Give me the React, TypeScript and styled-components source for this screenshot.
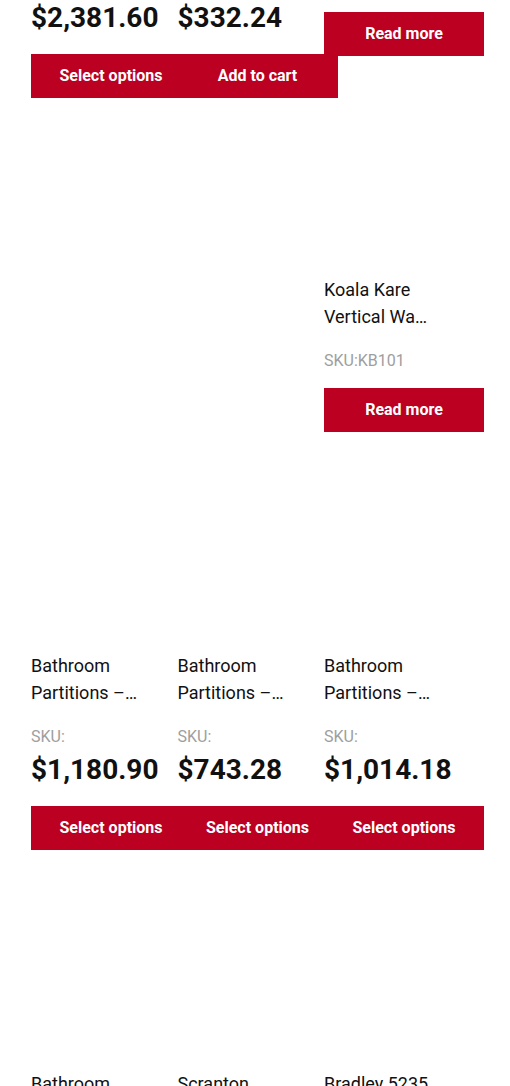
import React from 'react';
import styled, { createGlobalStyle } from 'styled-components';

const GlobalStyle = createGlobalStyle`
  html, body {
    margin: 0;
    padding: 0;
    background: #fff;
  }
  body {
    font-family: Roboto, 'Liberation Sans', sans-serif;
    color: #111;
  }
`;

const Viewport = styled.div`
  height: 100vh;
  overflow: hidden;
`;

// the page is scrolled part way down the shop listing
const Products = styled.div`
  margin-top: -320px;
  padding-left: 31px;
`;

const Row = styled.div`
  display: flex;
  align-items: flex-start;
`;

const Column = styled.div`
  display: flex;
  flex-direction: column;
  width: 146.5px;
  flex-shrink: 0;
`;

const Card = styled.div`
  width: 146.5px;
  flex-shrink: 0;
`;

// product images have not loaded yet, so this is an empty slot
const Thumb = styled.div`
  height: 201px;
  margin-bottom: 19px;
`;

const Title = styled.h2`
  margin: 0;
  width: 106px;
  font-size: 18px;
  font-weight: 400;
  line-height: 27px;
  color: #111;
  display: -webkit-box;
  -webkit-line-clamp: 2;
  -webkit-box-orient: vertical;
  overflow: hidden;
`;

const Sku = styled.div`
  margin-top: 19px;
  font-size: 16px;
  line-height: 24px;
  color: #9e9e9e;
  white-space: nowrap;
`;

const Price = styled.div`
  font-size: 28px;
  font-weight: 700;
  line-height: 42px;
  color: #111;
  white-space: nowrap;
`;

const Button = styled.a`
  display: block;
  margin-top: 15px;
  width: 160px;
  height: 44px;
  background: #bb0021;
  color: #fff;
  font-size: 16px;
  font-weight: 700;
  line-height: 44px;
  text-align: center;
  text-decoration: none;
  cursor: pointer;
`;

type Product = {
  title: string;
  sku: string;
  price?: string;
  action: string;
};

function ProductCard({ product }: { product: Product }): JSX.Element {
  return (
    <Card>
      <Thumb />
      <Title>{product.title}</Title>
      <Sku>SKU:{product.sku}</Sku>
      {product.price && <Price>{product.price}</Price>}
      <Button>{product.action}</Button>
    </Card>
  );
}

const first: Product[] = [
  { title: 'Bathroom Partitions – Phenolic Core', sku: '', price: '$2,381.60', action: 'Select options' },
  { title: 'Bobrick B-2888 Toilet Tissue Dispenser', sku: 'B2888', price: '$332.24', action: 'Add to cart' },
  { title: 'ASI 0199 Baby Changing Station', sku: 'ASI0199', action: 'Read more' },
];

const koala: Product = {
  title: 'Koala Kare Vertical Wall Mounted Baby Changing Station',
  sku: 'KB101',
  action: 'Read more',
};

const second: Product[] = [
  { title: 'Bathroom Partitions – Solid Plastic HDPE', sku: '', price: '$1,180.90', action: 'Select options' },
  { title: 'Bathroom Partitions – Powder Coated Steel', sku: '', price: '$743.28', action: 'Select options' },
  { title: 'Bathroom Partitions – Stainless Steel', sku: '', price: '$1,014.18', action: 'Select options' },
];

const third: Product[] = [
  { title: 'Bathroom Partitions – Urinal Screen', sku: '', price: '$412.60', action: 'Select options' },
  { title: 'Scranton Products Hiny Hiders', sku: '', price: '$1,320.00', action: 'Select options' },
  { title: 'Bradley 5235 Sanitary Napkin Disposal', sku: '5235', price: '$98.40', action: 'Add to cart' },
];

function App(): JSX.Element {
  return (
    <Viewport>
      <GlobalStyle />
      <Products>
        <Row>
          <ProductCard product={first[0]} />
          <ProductCard product={first[1]} />
          <Column>
            <ProductCard product={first[2]} />
            <ProductCard product={koala} />
          </Column>
        </Row>
        <Row>
          {second.map((p) => (
            <ProductCard key={p.title} product={p} />
          ))}
        </Row>
        <Row>
          {third.map((p) => (
            <ProductCard key={p.title} product={p} />
          ))}
        </Row>
      </Products>
    </Viewport>
  );
}

export default App;
